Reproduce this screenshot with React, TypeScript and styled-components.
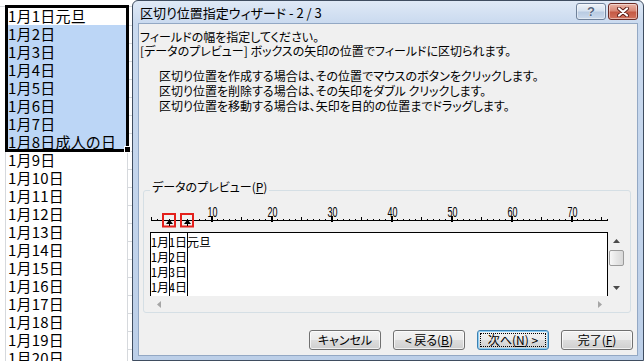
import React from "react";
import styled, { createGlobalStyle } from "styled-components";

const GlobalStyle = createGlobalStyle`
  html, body {
    margin: 0;
    padding: 0;
    background: #fff;
  }
  body {
    font-family: "Noto Sans CJK JP", "Noto Sans", sans-serif;
    overflow: hidden;
  }
  * {
    box-sizing: border-box;
  }
`;

const Screen = styled.div`
  display: flex;
  width: 644px;
  height: 361px;
  overflow: hidden;
`;

/* ---------- spreadsheet ---------- */

const Sheet = styled.div`
  position: relative;
  flex: none;
  width: 132px;
  padding-top: 6px;
  background: #fff;
`;

const Rows = styled.div`
  border-top: 1px solid #d6d9dd;
`;

const SheetRow = styled.div`
  display: grid;
  grid-template-columns: 6px 122px 1fr;
  height: 18px;
`;

const Cell = styled.div<{ $selected?: boolean }>`
  border-right: 1px solid #d6d9dd;
  border-bottom: 1px solid ${(p) => (p.$selected ? "#a9c5e8" : "#d6d9dd")};
  background: ${(p) => (p.$selected ? "#bcd6f6" : "#fff")};
  padding-left: 2px;
  font-size: 15px;
  line-height: 18px;
  letter-spacing: 0.2px;
  color: #000;
  white-space: nowrap;
`;

const EdgeCell = styled.div`
  border-bottom: 1px solid #d6d9dd;
`;

const SelectionFrame = styled.div`
  position: absolute;
  left: 5px;
  top: 5px;
  width: 124px;
  height: 147px;
  border: 3px solid #000;
  pointer-events: none;
`;

const FillHandle = styled.div`
  position: absolute;
  left: 124px;
  top: 146px;
  width: 7px;
  height: 7px;
  background: #000;
  border: 1px solid #fff;
`;

/* ---------- dialog window ---------- */

const Dialog = styled.section`
  flex: 1;
  display: flex;
  flex-direction: column;
  border: 1px solid #3f4d60;
  border-radius: 6px 6px 0 0;
  padding: 0 5px 4px;
  background: linear-gradient(#dfe9f6 0px, #cadaef 22px, #bccfe8 100%);
`;

const TitleBar = styled.header`
  display: flex;
  align-items: flex-start;
  height: 22px;
  padding-left: 2px;
`;

const TitleText = styled.h1`
  flex: 1;
  margin: 0;
  font-size: 13px;
  font-weight: normal;
  line-height: 24px;
  font-feature-settings: "palt";
  color: #000;
`;

const CaptionButtons = styled.div`
  display: flex;
  gap: 2px;
  margin-top: 2px;
`;

const CaptionButton = styled.div<{ $close?: boolean }>`
  display: flex;
  align-items: center;
  justify-content: center;
  width: 30px;
  height: 17px;
  border-radius: 3px;
  border: 1px solid ${(p) => (p.$close ? "#6a2a24" : "#6f819a")};
  background: ${(p) =>
    p.$close
      ? "linear-gradient(#eab4a6 0%, #d98a78 45%, #c55a45 55%, #d3735d 100%)"
      : "linear-gradient(#eef3f9 0%, #d6e2f0 45%, #b9cbe2 55%, #cbdaec 100%)"};
  box-shadow: inset 0 0 0 1px rgba(255, 255, 255, 0.45);
`;

const HelpGlyph = styled.span`
  font-family: "Liberation Sans", sans-serif;
  font-weight: bold;
  font-size: 13px;
  line-height: 13px;
  color: #56677e;
  text-shadow: 0 0 1px #fff, 0 0 1px #fff;
`;

const Client = styled.main`
  flex: 1;
  display: flex;
  flex-direction: column;
  border: 1px solid #93a8c4;
  background: #f0f0f0;
  font-size: 12px;
  color: #000;
  font-feature-settings: "palt";
`;

const Intro = styled.div`
  padding: 6px 0 0 1px;
  line-height: 14px;
`;

const Steps = styled.div`
  margin-top: 10px;
  padding-left: 20px;
  line-height: 15px;
`;

const Line = styled.div`
  white-space: nowrap;
`;

const GroupBox = styled.fieldset`
  margin: 67px 6px 0 4px;
  padding: 0 5px 0 6px;
  border: 1px solid #d5dfe5;
  border-radius: 3px;
  min-width: 0;
`;

const Legend = styled.legend`
  padding: 0 2px 6px;
  font-size: 12px;
  line-height: 14px;
`;

const PreviewGrid = styled.div`
  display: grid;
  grid-template-columns: 458px 17px;
  grid-template-rows: 64px 16px;
`;

const TextArea = styled.div`
  position: relative;
  overflow: hidden;
  background: #fff;
  border: 1px solid #000;
  border-bottom: none;
  padding-top: 1px;
  font-size: 12px;
  line-height: 15px;
  font-feature-settings: "hwid";
`;

const PreviewRow = styled.div`
  white-space: nowrap;
`;

const BreakLine = styled.div<{ $at: number }>`
  position: absolute;
  top: 0;
  bottom: 0;
  left: ${(p) => p.$at}px;
  width: 1px;
  background: #000;
`;

const VScroll = styled.div`
  display: flex;
  flex-direction: column;
  align-items: center;
`;

const HScroll = styled.div`
  display: flex;
  justify-content: space-between;
`;

const ArrowBox = styled.div<{ $h?: number; $w?: number }>`
  display: flex;
  align-items: center;
  justify-content: center;
  width: ${(p) => p.$w ?? 17}px;
  height: ${(p) => p.$h ?? 17}px;
`;

const Thumb = styled.div`
  width: 15px;
  height: 16px;
  margin-top: 1px;
  border: 1px solid #9b9b9b;
  border-radius: 2px;
  background: linear-gradient(to right, #f7f7f7, #e6e6e6 50%, #d9d9d9);
`;

const Spacer = styled.div`
  flex: 1;
`;

const ButtonRow = styled.div`
  display: flex;
  justify-content: flex-end;
  gap: 12px;
  margin-top: 17px;
  padding-right: 4px;
`;

const Button = styled.button<{ $default?: boolean }>`
  display: flex;
  width: 72px;
  height: 20px;
  padding: 2px;
  border: 1px solid ${(p) => (p.$default ? "#3c7fb1" : "#707070")};
  border-radius: 3px;
  background: linear-gradient(#f2f2f2 0%, #ebebeb 50%, #dddddd 51%, #cfcfcf 100%);
  box-shadow: ${(p) =>
    p.$default ? "inset 0 0 0 1px #8fd0f5" : "inset 0 0 0 1px rgba(255,255,255,0.7)"};
  font-family: "Noto Sans CJK JP", sans-serif;
  font-size: 12px;
  font-feature-settings: "palt";
  color: #000;
`;

const ButtonLabel = styled.span<{ $focus?: boolean }>`
  flex: 1;
  display: flex;
  align-items: center;
  justify-content: center;
  border: 1px dotted ${(p) => (p.$focus ? "#000" : "transparent")};
  line-height: 12px;
`;

/* ---------- drawings ---------- */

function CloseGlyph() {
  return (
    <svg width="12" height="10" viewBox="0 0 12 10">
      <path d="M2 1.5 L10 8.5 M10 1.5 L2 8.5" stroke="#5b1d17" strokeWidth="4" strokeLinecap="round" />
      <path d="M2 1.5 L10 8.5 M10 1.5 L2 8.5" stroke="#fff" strokeWidth="2.2" strokeLinecap="round" />
    </svg>
  );
}

function Tri({ dir, color }: { dir: "up" | "down" | "left" | "right"; color: string }) {
  const pts = {
    up: "0,4 7,4 3.5,0",
    down: "0,0 7,0 3.5,4",
    left: "4,0 4,7 0,3.5",
    right: "0,0 0,7 4,3.5",
  }[dir];
  const horiz = dir === "left" || dir === "right";
  return (
    <svg width={horiz ? 4 : 7} height={horiz ? 7 : 4}>
      <polygon points={pts} fill={color} />
    </svg>
  );
}

const breaks = [3, 6];

function Ruler() {
  const marks: React.ReactNode[] = [];
  for (let i = 0; i <= 76; i++) {
    const x = 1 + i * 6;
    if (i % 10 === 0 && i > 0) {
      marks.push(<rect key={i} x={x} y={16} width={2} height={6} />);
      marks.push(
        <text
          key={"t" + i}
          x={x + 1.5}
          y={16.5}
          textAnchor="middle"
          fontFamily="Liberation Sans, sans-serif"
          fontSize="14"
          textLength={10}
          lengthAdjust="spacingAndGlyphs"
        >
          {i}
        </text>
      );
    } else if (i % 5 === 0) {
      marks.push(<rect key={i} x={x} y={17} width={1} height={3} />);
    } else {
      marks.push(<rect key={i} x={x} y={19} width={1} height={1} />);
    }
  }
  return (
    <svg width="475" height="32" style={{ display: "block" }}>
      <g fill="#000">
        <rect x={1} y={20} width={457} height={1} />
        {marks}
      </g>
      {breaks.map((b) => {
        const cx = 1 + b * 6 + 0.5;
        return (
          <g key={b}>
            <rect x={cx - 6.5} y={14} width={12} height={12.5} fill="none" stroke="#e3201b" strokeWidth="2" />
            <polygon points={`${cx},19.5 ${cx - 3.5},24 ${cx + 3.5},24`} fill="#000" />
            <rect x={cx - 0.5} y={24} width={1} height={2} fill="#000" />
          </g>
        );
      })}
    </svg>
  );
}

const dates = [
  "1月1日元旦",
  "1月2日",
  "1月3日",
  "1月4日",
  "1月5日",
  "1月6日",
  "1月7日",
  "1月8日成人の日",
  "1月9日",
  "1月10日",
  "1月11日",
  "1月12日",
  "1月13日",
  "1月14日",
  "1月15日",
  "1月16日",
  "1月17日",
  "1月18日",
  "1月19日",
  "1月20日",
];

export default function App() {
  return (
    <>
      <GlobalStyle />
      <Screen>
        <Sheet>
          <Rows>
            {dates.map((d, i) => (
              <SheetRow key={d}>
                <Cell />
                <Cell $selected={i >= 1 && i <= 7}>{d}</Cell>
                <EdgeCell />
              </SheetRow>
            ))}
          </Rows>
          <SelectionFrame />
          <FillHandle />
        </Sheet>

        <Dialog>
          <TitleBar>
            <TitleText>区切り位置指定ウィザード - 2 / 3</TitleText>
            <CaptionButtons>
              <CaptionButton>
                <HelpGlyph>?</HelpGlyph>
              </CaptionButton>
              <CaptionButton $close>
                <CloseGlyph />
              </CaptionButton>
            </CaptionButtons>
          </TitleBar>

          <Client>
            <Intro>
              <Line>フィールドの幅を指定してください。</Line>
              <Line>[データのプレビュー] ボックスの矢印の位置でフィールドに区切られます。</Line>
            </Intro>
            <Steps>
              <Line>区切り位置を作成する場合は、その位置でマウスのボタンをクリックします。</Line>
              <Line>区切り位置を削除する場合は、その矢印をダブル クリックします。</Line>
              <Line>区切り位置を移動する場合は、矢印を目的の位置までドラッグします。</Line>
            </Steps>

            <GroupBox>
              <Legend>
                データのプレビュー(<u>P</u>)
              </Legend>
              <Ruler />
              <PreviewGrid>
                <TextArea>
                  {dates.slice(0, 5).map((d) => (
                    <PreviewRow key={d}>{d}</PreviewRow>
                  ))}
                  {breaks.map((b) => (
                    <BreakLine key={b} $at={b * 6} />
                  ))}
                </TextArea>
                <VScroll>
                  <ArrowBox>
                    <Tri dir="up" color="#4a4a4a" />
                  </ArrowBox>
                  <Thumb />
                  <Spacer />
                  <ArrowBox>
                    <Tri dir="down" color="#4a4a4a" />
                  </ArrowBox>
                </VScroll>
                <HScroll>
                  <ArrowBox $h={16}>
                    <Tri dir="left" color="#a6a6a6" />
                  </ArrowBox>
                  <ArrowBox $h={16}>
                    <Tri dir="right" color="#a6a6a6" />
                  </ArrowBox>
                </HScroll>
                <div />
              </PreviewGrid>
            </GroupBox>

            <ButtonRow>
              <Button>
                <ButtonLabel>キャンセル</ButtonLabel>
              </Button>
              <Button>
                <ButtonLabel>
                  &lt; 戻る(<u>B</u>)
                </ButtonLabel>
              </Button>
              <Button $default>
                <ButtonLabel $focus>
                  次へ(<u>N</u>) &gt;
                </ButtonLabel>
              </Button>
              <Button>
                <ButtonLabel>
                  完了(<u>F</u>)
                </ButtonLabel>
              </Button>
            </ButtonRow>
          </Client>
        </Dialog>
      </Screen>
    </>
  );
}
